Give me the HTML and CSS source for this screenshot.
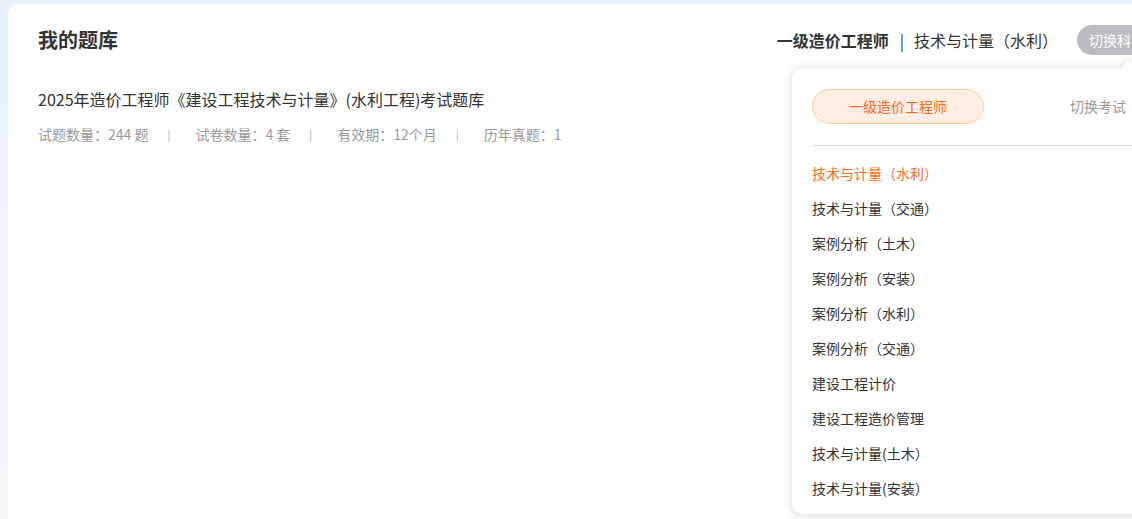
FILE: index.html
```html
<!DOCTYPE html>
<html lang="zh-CN">
<head>
<meta charset="utf-8">
<title>我的题库</title>
<link rel="stylesheet" href="styles.css">
</head>
<body>
<div class="page">
  <div class="card">
    <div class="header">
      <h1 class="title">我的题库</h1>
      <div class="current">
        <span class="exam">一级造价工程师</span>
        <span class="bar">|</span>
        <span class="subject">技术与计量（水利）</span>
        <button class="switch-btn">切换科目</button>
      </div>
    </div>
    <div class="bank">
      <div class="bank-name">2025年造价工程师《建设工程技术与计量》(水利工程)考试题库</div>
      <div class="meta">
        <span>试题数量：244 题</span><span class="sep">|</span>
        <span>试卷数量：4 套</span><span class="sep">|</span>
        <span>有效期：12个月</span><span class="sep">|</span>
        <span>历年真题：1</span>
      </div>
    </div>

    <div class="dropdown">
      <div class="arrow"></div>
      <div class="tabs">
        <div class="tab active">一级造价工程师</div>
        <div class="tab">切换考试</div>
      </div>
      <div class="divider"></div>
      <ul class="list">
        <li class="on">技术与计量（水利）</li>
        <li>技术与计量（交通）</li>
        <li>案例分析（土木）</li>
        <li>案例分析（安装）</li>
        <li>案例分析（水利）</li>
        <li>案例分析（交通）</li>
        <li>建设工程计价</li>
        <li>建设工程造价管理</li>
        <li>技术与计量(土木）</li>
        <li>技术与计量(安装）</li>
      </ul>
    </div>
  </div>
</div>
</body>
</html>
```

FILE: styles.css
```css
html, body {
  margin: 0;
  padding: 0;
  height: 100%;
  overflow: hidden;
}
body {
  font-family: "Noto Sans CJK SC", "Microsoft YaHei", sans-serif;
  background: linear-gradient(180deg, #e8f0f8 0%, #f1f3f9 40%, #f5f5fa 100%);
  color: #333;
}
.page {
  padding: 4px 0 0 8px;
  width: 1300px;
}
.card {
  position: relative;
  width: 1179px;
  height: 600px;
  box-sizing: border-box;
  background: #fff;
  border-radius: 10px;
  padding: 0 30px;
}
.header {
  height: 72px;
  display: flex;
  align-items: center;
  justify-content: space-between;
}
.title {
  margin: 0;
  font-size: 20px;
  font-weight: bold;
  color: #333;
  line-height: 1;
}
.current {
  display: flex;
  align-items: center;
  font-size: 16px;
  color: #333;
}
.exam {
  font-weight: bold;
}
.bar {
  margin: 0 10px 0 11px;
  color: #333;
}
.subject {
  color: #333;
}
.switch-btn {
  margin-left: 19px;
  height: 30px;
  padding: 0 12px;
  border: none;
  border-radius: 15px;
  background: #b9bdc3;
  color: #fff;
  font-family: inherit;
  font-size: 14px;
  line-height: 30px;
  flex-shrink: 0;
}
.bank {
  padding-top: 12px;
}
.bank-name {
  font-size: 16px;
  line-height: 22px;
  color: #333;
}
.meta {
  margin-top: 15px;
  font-size: 14px;
  line-height: 18px;
  color: #999;
  display: flex;
  align-items: center;
}
.sep {
  margin: 0 25px 0 19px;
  font-size: 11px;
  color: #aaa;
}
.dropdown {
  position: absolute;
  left: 784px;
  top: 64px;
  width: 400px;
  height: 446px;
  background: #fff;
  border-radius: 10px;
  box-shadow: 0 1px 8px rgba(0, 0, 0, 0.16);
  padding: 21px 0 0 20px;
  box-sizing: border-box;
}
.arrow {
  position: absolute;
  top: -5px;
  left: 330px;
  width: 12px;
  height: 12px;
  background: #fff;
  transform: rotate(45deg);
  box-shadow: -2px -2px 4px rgba(0, 0, 0, 0.07);
}
.tabs {
  position: relative;
  display: flex;
  gap: 28px;
}
.tab {
  flex: 0 0 172px;
  width: 172px;
  height: 35px;
  box-sizing: border-box;
  border-radius: 18px;
  font-size: 14px;
  line-height: 35px;
  text-align: center;
  color: #999;
}
.tab.active {
  background: #ffeee3;
  border: 1px solid #ffcb9f;
  line-height: 33px;
  color: #ff6a1a;
}
.divider {
  margin-top: 21px;
  height: 1px;
  background: #dddddd;
}
.list {
  list-style: none;
  margin: 0;
  padding: 10px 0 0;
}
.list li {
  height: 35px;
  line-height: 35px;
  font-size: 14px;
  color: #333;
}
.list li.on {
  color: #ff6a1a;
}
```
